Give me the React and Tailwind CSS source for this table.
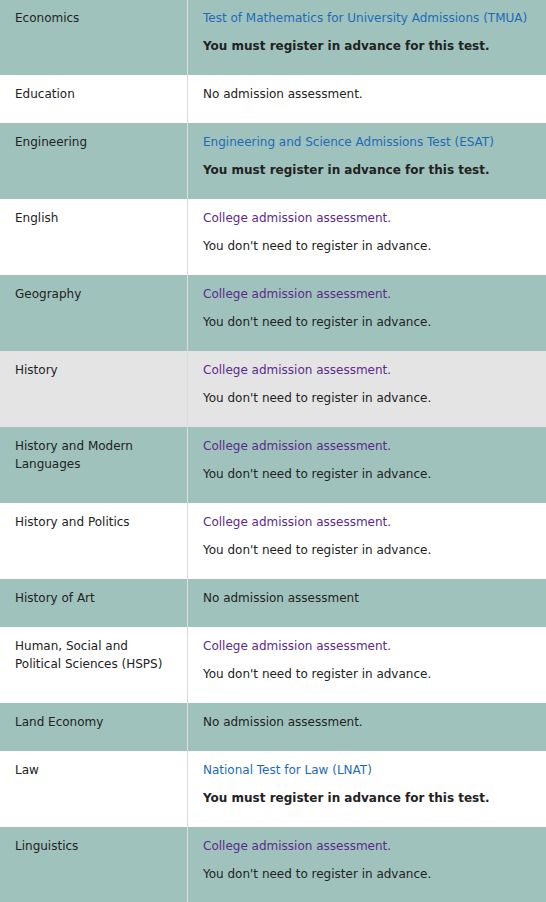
const rows = [
  { subject: "Economics", link: "Test of Mathematics for University Admissions (TMUA)", kind: "blue", note: "must" },
  { subject: "Education", text: "No admission assessment.", bg: "white" },
  { subject: "Engineering", link: "Engineering and Science Admissions Test (ESAT)", kind: "blue", note: "must" },
  { subject: "English", link: "College admission assessment.", kind: "purple", note: "dont", bg: "white" },
  { subject: "Geography", link: "College admission assessment.", kind: "purple", note: "dont" },
  { subject: "History", link: "College admission assessment.", kind: "purple", note: "dont", bg: "hover" },
  { subject: "History and Modern Languages", link: "College admission assessment.", kind: "purple", note: "dont" },
  { subject: "History and Politics", link: "College admission assessment.", kind: "purple", note: "dont", bg: "white" },
  { subject: "History of Art", text: "No admission assessment" },
  { subject: "Human, Social and Political Sciences (HSPS)", link: "College admission assessment.", kind: "purple", note: "dont", bg: "white" },
  { subject: "Land Economy", text: "No admission assessment." },
  { subject: "Law", link: "National Test for Law (LNAT)", kind: "blue", note: "must", bg: "white" },
  { subject: "Linguistics", link: "College admission assessment.", kind: "purple", note: "dont" },
]

const bgClass = (bg) => {
  if (bg === "white") return "bg-white"
  if (bg === "hover") return "bg-[#e4e4e4]"
  return "bg-[#9fc2bc]"
}

export default function App() {
  return (
    <div className="w-[546px] -mt-px bg-white text-[12px] leading-[18px] text-[#222]" style={{ fontFamily: '"DejaVu Sans", Verdana, sans-serif' }}>
      {rows.map((r) => (
        <div key={r.subject} className={`flex ${bgClass(r.bg)}`}>
          <div className="w-[188px] shrink-0 border-r border-[#dcdcdc] pl-[15px] pr-[15px] pt-[10px] pb-[20px]">
            {r.subject}
          </div>
          <div className="flex-1 pl-[15px] pr-2 pt-[10px] pb-[20px]">
            {r.text ? (
              <p>{r.text}</p>
            ) : (
              <>
                <p className={r.kind === "blue" ? "text-[#1d6bb8]" : "text-[#5b2a8c]"}>{r.link}</p>
                {r.note === "must" ? (
                  <p className="mt-[10px] font-bold">You must register in advance for this test.</p>
                ) : (
                  <p className="mt-[10px]">You don't need to register in advance.</p>
                )}
              </>
            )}
          </div>
        </div>
      ))}
    </div>
  )
}
